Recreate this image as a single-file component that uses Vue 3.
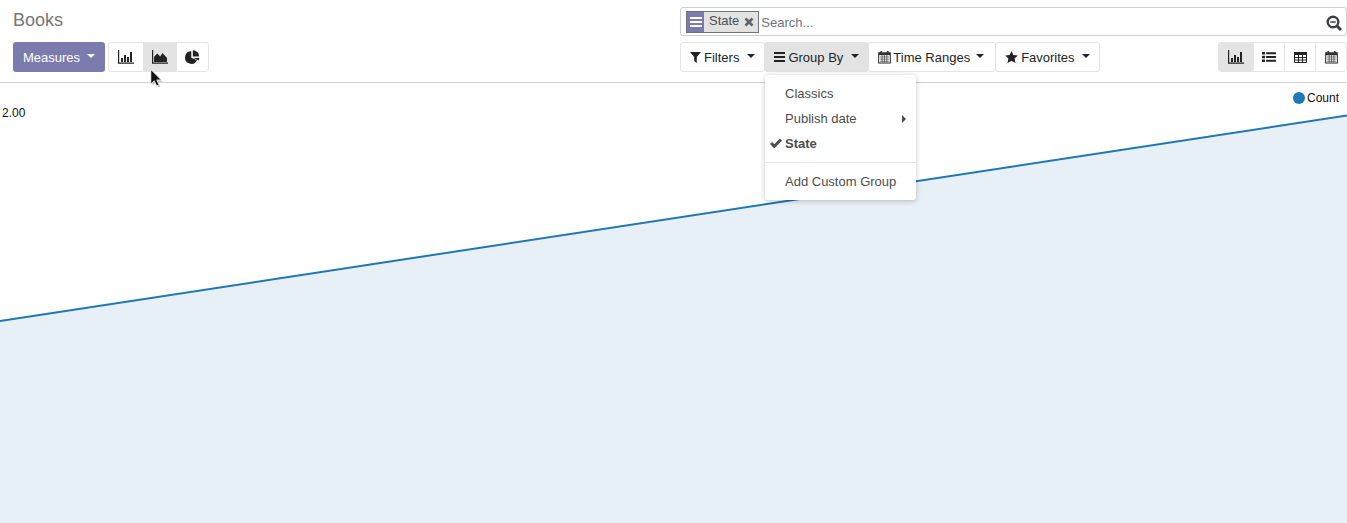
<script setup>
const filters = [
  { label: 'Filters', icon: 'filter', cls: 'filters-dd' },
  { label: 'Group By', icon: 'bars', cls: 'active' },
  { label: 'Time Ranges', icon: 'calendar', cls: 'time' },
  { label: 'Favorites', icon: 'star', cls: 'favorites' }
]
const calendarGrid = 'M2 7h10M2 9.300h10M2 11.600h10M4.500 5v8M7 5v8M9.500 5v8'
</script>

<template>
  <div class="page">
    <header class="panel">
      <div class="col left">
        <div class="title">Books</div>
        <div class="row">
          <button class="measures">Measures<span class="caret"></span></button>
          <div class="group views-left">
            <button class="ib">
              <svg width="16" height="14" viewBox="0 0 16 14"><path d="M.6 0v13.200H16" fill="none" stroke="#222" stroke-width="1.200"/><path d="M3 8h2v4H3zM6 5h2v7H6zM9 7h2v5H9zM12 2h2v10h-2z" fill="#222"/></svg>
            </button>
            <button class="ib on">
              <svg width="16" height="14" viewBox="0 0 16 14"><path d="M.6 0v13.200H16" fill="none" stroke="#222" stroke-width="1.200"/><path d="M2 12V7l3.200-3.500L8.200 6.500 10.500 3 15 8v4z" fill="#222"/></svg>
            </button>
            <button class="ib">
              <svg width="15" height="14" viewBox="0 0 15 14"><path d="M6.300 1.200A6.300 6.300 0 1 0 12 10.300L6.300 7.800z" fill="#222"/><path d="M7.800 0.200A6.300 6.300 0 0 1 14.200 6.500L7.800 6.500z" fill="#222"/><path d="M8.500 8h6a6.300 6.300 0 0 1-1 2.500z" fill="#222"/></svg>
            </button>
          </div>
        </div>
      </div>
      <div class="col right">
        <div class="search">
          <div class="facet">
            <span class="facet-icon">
              <svg width="12" height="10" viewBox="0 0 12 10"><path d="M0 0h12v2H0zM0 4h12v2H0zM0 8h12v2H0z" fill="#fff"/></svg>
            </span>
            <span class="facet-text">State</span>
            <svg class="facet-x" width="10" height="10" viewBox="0 0 10 10"><path d="M1.500 1.500l7 7M8.500 1.500l-7 7" stroke="#5f6368" stroke-width="2.600" fill="none"/></svg>
          </div>
          <span class="placeholder">Search...</span>
          <svg class="loupe" width="16" height="16" viewBox="0 0 16 16"><circle cx="7" cy="7" r="5.300" fill="none" stroke="#3d3f42" stroke-width="2.400"/><path d="M10.800 10.800l4.200 4.200" stroke="#3d3f42" stroke-width="3"/><path d="M4.300 7h5.400" stroke="#3d3f42" stroke-width="1.500"/></svg>
        </div>
        <div class="row between">
          <div class="filters">
            <div v-for="f in filters" :key="f.label" class="dd" :class="f.cls">
              <svg v-if="f.icon === 'filter'" width="11" height="11" viewBox="0 0 11 11"><path d="M0 0h11L6.800 5v6L4.200 9V5z" fill="#222"/></svg>
              <svg v-else-if="f.icon === 'bars'" width="11" height="10" viewBox="0 0 11 10"><path d="M0 0h11v2H0zM0 4h11v2H0zM0 8h11v2H0z" fill="#222"/></svg>
              <svg v-else-if="f.icon === 'calendar'" width="13" height="14" viewBox="0 0 14 14"><rect x=".7" y="2.500" width="12.600" height="11" fill="none" stroke="#333" stroke-width="1.100"/><path d="M1 2.500h12v2.500H1z" fill="#333"/><path :d="calendarGrid" fill="none" stroke="#333" stroke-width=".7"/><path d="M3.500 0.500v3M10.500 0.500v3" stroke="#333" stroke-width="1.800"/></svg>
              <svg v-else width="13" height="12" viewBox="0 0 13 12"><path d="M6.500 0l1.900 4 4.400.5-3.200 3 .9 4.400-4-2.200-4 2.200.9-4.400L.2 4.500 4.600 4z" fill="#222"/></svg>
              <span class="dd-label">{{ f.label }}</span>
              <span class="caret dark"></span>
            </div>
          </div>
          <div class="group views-right">
            <button class="vb on">
              <svg width="16" height="14" viewBox="0 0 16 14"><path d="M.6 0v13.200H16" fill="none" stroke="#222" stroke-width="1.200"/><path d="M3 8h2v4H3zM6 5h2v7H6zM9 7h2v5H9zM12 2h2v10h-2z" fill="#222"/></svg>
            </button>
            <button class="vb">
              <svg width="14" height="10" viewBox="0 0 14 10"><path d="M0 0h3v2.400H0zM4 .2h10v2H4zM0 3.800h3v2.400H0zM4 4h10v2H4zM0 7.600h3v2.400H0zM4 7.800h10v2H4z" fill="#222"/></svg>
            </button>
            <button class="vb">
              <svg width="13" height="11" viewBox="0 0 13 11"><path d="M.5.500h12v10H.500z" fill="none" stroke="#222"/><path d="M0 0h13v3H0z" fill="#222"/><path d="M0 5.500h13M0 8h13M4.500 3v8M8.500 3v8" stroke="#222" fill="none"/></svg>
            </button>
            <button class="vb">
              <svg width="13" height="14" viewBox="0 0 14 14"><rect x=".7" y="2.500" width="12.600" height="11" fill="none" stroke="#333" stroke-width="1.100"/><path d="M1 2.500h12v2.500H1z" fill="#333"/><path :d="calendarGrid" fill="none" stroke="#333" stroke-width=".7"/><path d="M3.500 0.500v3M10.500 0.500v3" stroke="#333" stroke-width="1.800"/></svg>
            </button>
          </div>
        </div>
      </div>
    </header>

    <main class="chart">
      <svg class="plot" width="1347" height="440" viewBox="0 0 1347 440">
        <path d="M0 238L1347 32.500V440H0z" fill="#e8f0f7"/>
        <path d="M0 238L1347 32.500" fill="none" stroke="#1f77b4" stroke-width="2"/>
      </svg>
      <span class="tick">2.00</span>
      <div class="legend"><span class="dot"></span>Count</div>
      <div class="menu">
        <div class="item">Classics</div>
        <div class="item">Publish date<span class="sub"></span></div>
        <div class="item bold">
          <svg class="check" width="12" height="10" viewBox="0 0 12 10"><path d="M1 5l3.300 3.300L11 1.500" fill="none" stroke="#4c4c4c" stroke-width="3"/></svg>
          State
        </div>
        <div class="sep"></div>
        <div class="item">Add Custom Group</div>
      </div>
      <svg class="cursor" width="14" height="21" viewBox="0 0 14 21"><path d="M2.500 2.500v14l3.300-3 2.200 5 2.400-1-2.200-4.800h4.300z" fill="#000" opacity=".25"/><path d="M.8.500v14.500l3.500-3.200 2.300 5.200 2.500-1.100-2.300-5h4.600z" fill="#111" stroke="#fff" stroke-width=".8"/></svg>
    </main>
  </div>
</template>

<style scoped>
.page {
  width: 1347px;
  height: 523px;
  overflow: hidden;
  font-family: "Liberation Sans", Arial, sans-serif;
  font-size: 13px;
  color: #212529;
  background: #fff;
}
.panel {
  height: 82px;
  border-bottom: 1px solid #cfcfcf;
  display: flex;
  box-sizing: content-box;
}
.col { display: flex; flex-direction: column; }
.left { width: 667px; padding-left: 13px; }
.right { width: 667px; padding-top: 7px; }
.title {
  font-size: 18px;
  line-height: 21px;
  height: 42px;
  padding-top: 10px;
  box-sizing: border-box;
  color: #777;
}
.row { display: flex; align-items: flex-start; gap: 3px; }
.between { justify-content: space-between; gap: 0; margin-top: 6px; }
button { font: inherit; padding: 0; border: 0; background: none; }
.measures {
  width: 92px;
  height: 30px;
  background: #7c7bad;
  color: #fff;
  border-radius: 3px;
  display: flex;
  align-items: center;
  justify-content: center;
}
.caret {
  width: 0;
  height: 0;
  margin-left: 7px;
  margin-top: -3px;
  border-left: 4px solid transparent;
  border-right: 4px solid transparent;
  border-top: 4px solid #fff;
}
.caret.dark { border-top-color: #212529; margin-left: 8px; }
.time .dd-label { margin-left: 2px; }
.time .caret.dark { margin-left: 6px; margin-right: 2px; }
.favorites .caret.dark { margin-left: 7px; }
.group {
  display: flex;
  height: 30px;
  box-sizing: border-box;
  border: 1px solid #e4e4e4;
  border-radius: 3px;
  overflow: hidden;
}
.ib, .vb { display: flex; align-items: center; justify-content: center; height: 28px; }
.ib { width: 34px; }
.ib:last-child { width: 31px; }
.views-left { width: 101px; }
.on { background: #e3e3e3; }
.views-right { width: 129px; }
.vb { width: 31px; border-left: 1px solid #e4e4e4; }
.vb:first-child { width: 34px; border-left: 0; }
.search {
  height: 29px;
  box-sizing: border-box;
  border: 1px solid #cfcfcf;
  border-radius: 3px;
  display: flex;
  align-items: center;
  padding-left: 5px;
  position: relative;
}
.facet {
  display: flex;
  align-items: center;
  height: 22px;
  box-sizing: border-box;
  border: 1px solid #6c757d;
  background: #e2e3e1;
}
.facet-icon {
  width: 17px;
  height: 20px;
  background: #7c7bad;
  display: flex;
  align-items: center;
  justify-content: center;
}
.facet-text { margin-left: 5px; color: #495057; position: relative; top: -1px; }
.facet-x { margin: 0 4px 0 5px; }
.placeholder { margin-left: 2px; color: #6c757d; position: relative; top: 1px; }
.loupe { position: absolute; right: 4px; top: 7px; }
.filters { display: flex; }
.dd {
  height: 30px;
  box-sizing: border-box;
  border: 1px solid #e4e4e4;
  margin-left: -1px;
  display: flex;
  align-items: center;
  padding: 0 9px;
  border-radius: 3px;
  white-space: nowrap;
}
.dd:first-child { margin-left: 0; }
.dd.active { background: #e3e3e3; border-color: #e3e3e3; }
.dd-label { margin-left: 3px; }
.chart { position: relative; height: 440px; }
.plot { display: block; }
.tick { position: absolute; left: 2px; top: 23px; font-size: 12px; color: #111; }
.legend {
  position: absolute;
  right: 8px;
  top: 8px;
  display: flex;
  align-items: center;
  gap: 2px;
  font-size: 12px;
  color: #111;
}
.dot { width: 12px; height: 12px; border-radius: 50%; background: #1f77b4; }
.menu {
  position: absolute;
  left: 765px;
  top: -8px;
  width: 151px;
  height: 125px;
  box-sizing: border-box;
  padding-top: 6px;
  background: #fff;
  border-radius: 3px;
  box-shadow: 0 1px 5px rgba(0, 0, 0, .24);
  color: #4c4c4c;
}
.item {
  height: 25px;
  line-height: 25px;
  padding-left: 20px;
  position: relative;
  white-space: nowrap;
}
.bold { font-weight: bold; }
.check { position: absolute; left: 5px; top: 7px; }
.sub {
  position: absolute;
  right: 10px;
  top: 9px;
  border-top: 4px solid transparent;
  border-bottom: 4px solid transparent;
  border-left: 4px solid #4c4c4c;
}
.sep { height: 1px; background: #e6e6e6; margin: 6px 0; }
.cursor { position: absolute; left: 150px; top: -14px; }
</style>
